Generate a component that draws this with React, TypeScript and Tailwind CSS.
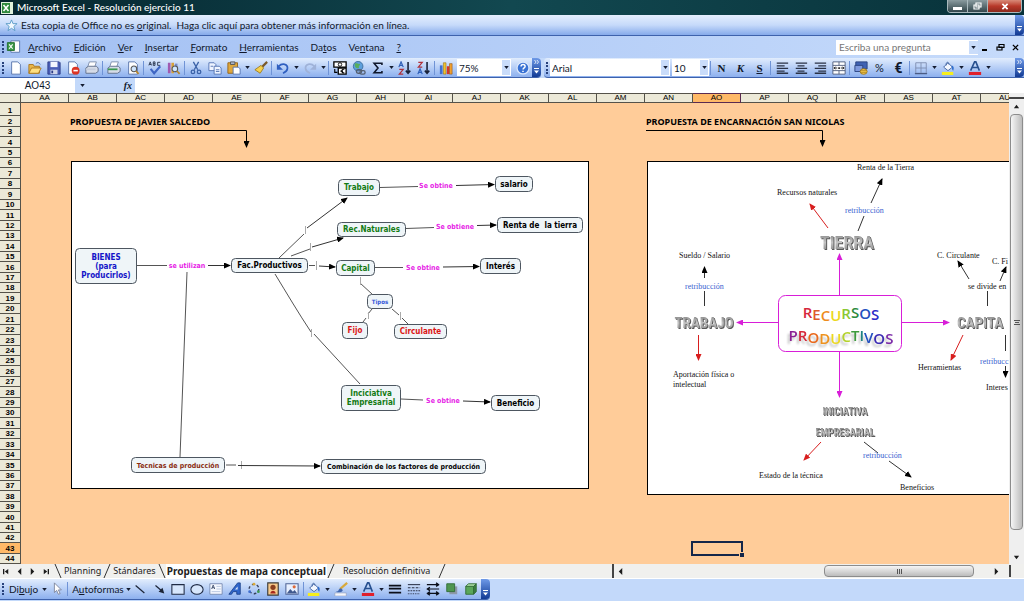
import React from "react";

type Kids = { children?: React.ReactNode };

const Ico = ({ children }: Kids) => (
  <svg viewBox="0 0 16 16" className="h-[14px] w-[14px]" aria-hidden="true">
    {children}
  </svg>
);

const page = <path d="M3 1h7l3 3v11H3z" fill="#fff" stroke="#5470a8" />;
const lens = (
  <g>
    <circle cx="9" cy="9" r="3.2" fill="#cfe6ff" stroke="#555" strokeWidth="1.2" />
    <path d="M11.4 11.4l3 3.4" stroke="#b8862c" strokeWidth="2" />
  </g>
);
const printer = (tone: string) => (
  <g>
    <path d="M5 1h8l-2 6H3z" fill="#fff" stroke="#7a8aa8" />
    <path d="M1 8l3-2h9l2 2v4l-3 2H1z" fill="#d6dce8" stroke="#5c6a86" />
    <path d="M1 9.5h11" stroke={tone} strokeWidth="2" />
  </g>
);
const bucket = (
  <g>
    <path d="M3 7l5-5 5 5-5 4z" fill="#f3f7ff" stroke="#3c5f9e" />
    <path d="M6 5c-1-4 3-5 3-1" fill="none" stroke="#3c5f9e" />
    <path d="M12 5c3 1 3 3 2 6-2-1-1-3-2-6z" fill="#2f6fd0" />
    <path d="M1 12.500h13v3.500H1z" fill="#f6ee1e" />
  </g>
);
const letterA = (
  <g>
    <path d="M3 11L7.500 1h1.500L13 11M5 7.500h6" fill="none" stroke="#27508f" strokeWidth="1.800" />
    <path d="M1 12.500h14v3.500H1z" fill="#e0202c" />
  </g>
);

const icons: Record<string, React.ReactNode> = {
  Nuevo: page,
  Abrir: (
    <g>
      <path d="M1 4h5l1 2h6v8H1z" fill="#e9b64a" stroke="#a8741a" />
      <path d="M1 14l3-6h11l-3 6z" fill="#ffdf80" stroke="#a8741a" />
      <path d="M9 3c2-2 4-1 5 1" fill="none" stroke="#3b66b0" />
    </g>
  ),
  Guardar: (
    <g>
      <path d="M1 1h13l1 1v13H1z" fill="#4a5fb8" stroke="#2b3a86" />
      <path d="M4 1h8v6H4z" fill="#f3f6ff" />
      <path d="M4 10h8v5H4z" fill="#cdd4ea" />
      <path d="M5 11h2v3H5z" fill="#2b3a86" />
    </g>
  ),
  Permiso: (
    <g>
      {page}
      <circle cx="11" cy="11" r="4.500" fill="#dc3424" />
      <path d="M8.500 11h5" stroke="#fff" strokeWidth="1.800" />
    </g>
  ),
  Correo: printer("#c3cbdc"),
  Imprimir: printer("#3a9a4e"),
  "Vista preliminar": (
    <g>
      {page}
      {lens}
    </g>
  ),
  Ortografía: (
    <g>
      <path d="M1 5l1.500-4L4 5M1.500 4h2M6 1v4h2V1H6m0 2h2M14 1.500h-3V5h3" fill="none" stroke="#26324c" />
      <path d="M3 9l4 5 7-8" fill="none" stroke="#3f66c4" strokeWidth="2.400" />
    </g>
  ),
  Referencia: (
    <g>
      <path d="M1 2h3v12H1z" fill="#a05ab0" />
      <path d="M5 2h3v12H5z" fill="#d8a03a" />
      <path d="M9 3h3v10H9z" fill="#7a8cc8" />
      {lens}
    </g>
  ),
  Cortar: (
    <g fill="none" stroke="#3b62a8" strokeWidth="1.500">
      <path d="M5 1l5 9M11 1L6 10" />
      <circle cx="4.500" cy="12.500" r="2" />
      <circle cx="11.500" cy="12.500" r="2" />
    </g>
  ),
  Copiar: (
    <g fill="#eef4ff" stroke="#4f6fb0">
      <path d="M1 2h6l2 2v7H1z" />
      <path d="M7 6h6l2 2v7H7z" />
      <path d="M9 10h4M9 12h4M3 6h3" />
    </g>
  ),
  Pegar: (
    <g>
      <path d="M1 2h11v12H1z" fill="#e0a83c" stroke="#936012" />
      <path d="M4 1h5v3H4z" fill="#a9b3c6" stroke="#555" />
      <path d="M7 7h6l2 2v6H7z" fill="#fff" stroke="#4f6fb0" />
    </g>
  ),
  "Copiar formato": (
    <g>
      <path d="M15 1l-6 6" stroke="#7a5a2a" strokeWidth="2.500" />
      <path d="M8 5l3 3-4 6-6-4z" fill="#f5d04e" stroke="#9b7a1e" />
    </g>
  ),
  Deshacer: (
    <g>
      <path d="M3 6c4-4 11-3 10 3-.5 3-3 4-5 5" fill="none" stroke="#2f5fc0" strokeWidth="2" />
      <path d="M1 3v7h7z" fill="#2f5fc0" />
    </g>
  ),
  Rehacer: (
    <g>
      <path d="M13 6C9 2 2 3 3 9c.5 3 3 4 5 5" fill="none" stroke="#9fb2d8" strokeWidth="2" />
      <path d="M15 3v7H8z" fill="#9fb2d8" />
    </g>
  ),
  Euroconversión: (
    <g>
      <path d="M1 1h14v6H1z" fill="#fff" stroke="#000" strokeWidth="1.500" />
      <circle cx="8" cy="4" r="2" fill="none" stroke="#000" />
      <path d="M6 8h9v7H6z" fill="#fff" stroke="#000" strokeWidth="1.500" />
      <path d="M13 9.500c-4-1-4 5 0 4M8.500 11.500h3M2 9v4h3" fill="none" stroke="#000" strokeWidth="1.300" />
    </g>
  ),
  Hipervínculo: (
    <g>
      <circle cx="7" cy="6" r="5.500" fill="#5d9fdc" stroke="#3b6d9c" />
      <path d="M3 3c3-1 4 1 6 0 1 2-2 2-1 5-3 1-5-1-5-5z" fill="#58ad5c" />
      <rect x="5" y="10" width="6" height="4" rx="2" fill="none" stroke="#555f70" strokeWidth="1.500" />
      <rect x="9" y="11" width="6" height="4" rx="2" fill="none" stroke="#555f70" strokeWidth="1.500" />
    </g>
  ),
  Autosuma: <path d="M12.500 4.500V2.500h-9L8 8l-4.500 5.500h9v-2" fill="none" stroke="#10182c" strokeWidth="1.800" />,
  "Orden ascendente": (
    <g fill="none" strokeWidth="1.400">
      <path d="M1 7l2.500-6L6 7M2 5h3" stroke="#2f5fb8" />
      <path d="M1.500 9.500h4.500L1.500 15H6" stroke="#b0303a" />
      <path d="M11.500 1v13M9 11l2.500 3L14 11" stroke="#1a2238" strokeWidth="1.800" />
    </g>
  ),
  "Orden descendente": (
    <g fill="none" strokeWidth="1.400">
      <path d="M1.500 1.500h4.500L1.500 7H6" stroke="#b0303a" />
      <path d="M1 15l2.500-6L6 15M2 13h3" stroke="#2f5fb8" />
      <path d="M11.500 1v13M9 11l2.500 3L14 11" stroke="#1a2238" strokeWidth="1.800" />
    </g>
  ),
  "Asistente para gráficos": (
    <g>
      <path d="M1 5h3v10H1z" fill="#3f6fd0" />
      <path d="M5 2h3v13H5z" fill="#f0c22e" stroke="#8a6a10" strokeWidth=".6" />
      <path d="M9 6h3v9H9z" fill="#d2352c" />
      <path d="M12 3h3v12h-3z" fill="#f0a02e" stroke="#8a4a10" strokeWidth=".6" />
    </g>
  ),
  Ayuda: (
    <g>
      <circle cx="8" cy="8" r="6.800" fill="#3a72d4" stroke="#dbe7fb" strokeWidth="1.400" />
      <path d="M5.800 6.200c0-3 4.600-3 4.600 0 0 1.800-2.300 1.600-2.300 3.400M8 11v1.600" fill="none" stroke="#fff" strokeWidth="1.700" />
    </g>
  ),
  Izquierda: <path d="M2 2.500h13M2 5.500h9M2 8.500h13M2 11.500h9M2 14h13" stroke="#2a3246" strokeWidth="1.500" />,
  Centrar: <path d="M2 2.500h13M4 5.500h8M2 8.500h13M4 11.500h8M2 14h13" stroke="#2a3246" strokeWidth="1.500" />,
  Derecha: <path d="M2 2.500h13M6 5.500h9M2 8.500h13M6 11.500h9M2 14h13" stroke="#2a3246" strokeWidth="1.500" />,
  Combinar: (
    <g>
      <path d="M1 1h14v14H1zM1 5h14M1 11h14M8 1v4M8 11v4" fill="#fff" stroke="#4a5878" />
      <path d="M2 8h4M10 8h4M4 6.500L2.500 8 4 9.500M12 6.500L13.500 8 12 9.500" fill="none" stroke="#111" />
      <path d="M7.200 7h1.800v2.200H7.200z" fill="#111" />
    </g>
  ),
  Moneda: (
    <g>
      <path d="M2 1h13v8H2z" fill="#3f62b4" stroke="#27407e" />
      <path d="M1 5h9v7H1z" fill="#7f9ade" stroke="#27407e" />
      <ellipse cx="11" cy="12" rx="4" ry="3.200" fill="#f2c74e" stroke="#9a7316" />
      <path d="M7.500 11h7M8 13h6" stroke="#9a7316" strokeWidth=".7" />
    </g>
  ),
  Bordes: (
    <g>
      <path d="M2 2h12v12H2zM8 2v12M2 8h12" fill="none" stroke="#7b8cae" strokeWidth="1" />
      <path d="M1 14.500h14" stroke="#3f4f78" strokeWidth="1.200" />
    </g>
  ),
  "Color de relleno": bucket,
  "Color de fuente": letterA,
  Seleccionar: <path d="M5 1v11l2.600-2.400L9.600 14l2-.8-2-4.200H13z" fill="#fff" stroke="#7b8298" />,
  Línea: <path d="M3 4l10 8.500" stroke="#1c2436" strokeWidth="1.400" />,
  Flecha: (
    <g>
      <path d="M4 4l7 6" stroke="#1c2436" strokeWidth="1.400" />
      <path d="M14 13L7.500 11 12 6.500z" fill="#1c2436" />
    </g>
  ),
  Rectángulo: <path d="M1 3h14v11H1z" fill="#d7e6fc" stroke="#1f2a44" strokeWidth="1.200" />,
  Elipse: <ellipse cx="8" cy="8.500" rx="7" ry="5.500" fill="#d7e6fc" stroke="#1f2a44" strokeWidth="1.200" />,
  "Cuadro de texto": (
    <g>
      <path d="M1 2h14v12H1z" fill="#f6f9ff" stroke="#7286ae" />
      <path d="M3 8l1.800-4.500L6.500 8M3.500 6.500h2.500" fill="none" stroke="#3d4b6c" />
      <path d="M8.500 5h5M8.500 8h5M3 11h10" fill="none" stroke="#b4c2de" />
    </g>
  ),
  WordArt: (
    <g>
      <path d="M1 14L11 1h3v13h-4v-3H6l-2 3z" fill="#2f66cc" stroke="#1e438c" />
      <path d="M8 8.500l3-3.500v3.500z" fill="#dfeafc" />
    </g>
  ),
  Diagrama: (
    <g>
      <circle cx="8" cy="8" r="5.500" fill="none" stroke="#35405c" strokeWidth="1.600" strokeDasharray="3 2.700" />
      <circle cx="8" cy="2.500" r="1.600" fill="#d8a83a" />
      <circle cx="13" cy="11" r="1.600" fill="#3f9a52" />
      <circle cx="3" cy="11" r="1.600" fill="#3f6fd0" />
    </g>
  ),
  "Imagen prediseñada": (
    <g>
      <path d="M2 1h12v14H2z" fill="#f7c98a" stroke="#3b3b3b" strokeWidth="1.300" />
      <circle cx="8" cy="6" r="3" fill="#8a3f20" />
      <path d="M5 13c0-4 6-4 6 0z" fill="#a8281c" />
    </g>
  ),
  Imagen: (
    <g>
      <path d="M1 2h14v12H1z" fill="#e8f0ff" stroke="#4f6496" strokeWidth="1.200" />
      <path d="M2 13l4-5 3 3 2-2 3 4z" fill="#40598e" />
      <circle cx="10.500" cy="5.500" r="1.800" fill="#dd6a3a" />
    </g>
  ),
  "Color de línea": (
    <g>
      <path d="M15 1L7 8" stroke="#d8a93a" strokeWidth="2.600" />
      <path d="M8 7c-3 0-2 4-6 4 4 2 8 0 8-2z" fill="#4168b0" />
      <path d="M1 12.500h13v3.500H1z" fill="#f4f6fb" stroke="#8a94ac" strokeWidth=".6" />
    </g>
  ),
  "Estilo de línea": <path d="M1 4h14M1 7.500h14M1 12h14" stroke="#0b0f1a" strokeWidth="2" />,
  "Estilo de guión": (
    <g stroke="#2b3348" strokeWidth="1.200">
      <path d="M1 3h14" />
      <path d="M1 6.500h14" strokeDasharray="3 1.500" />
      <path d="M1 10h14" strokeDasharray="2 1" />
      <path d="M1 13.500h14" strokeDasharray="1 1" />
    </g>
  ),
  "Estilo de flecha": (
    <g fill="none" stroke="#0b0f1a" strokeWidth="1.400">
      <path d="M1 3h14M1 8h14M1 13h14M11.500 1L14.500 3l-3 2M4.500 6L1.500 8l3 2M11.500 11l3 2-3 2M4.500 11l-3 2 3 2" />
    </g>
  ),
  Sombra: (
    <g>
      <path d="M5 5h9v9H5z" fill="#8d98a8" />
      <path d="M2 2h9v9H2z" fill="#4f9650" stroke="#2f6a34" />
    </g>
  ),
  "Estilo 3D": (
    <g stroke="#2f6a34">
      <path d="M2 5h9v9H2z" fill="#5aa65a" />
      <path d="M2 5l3-3h9l-3 3z" fill="#a6d8a0" />
      <path d="M11 5l3-3v9l-3 3z" fill="#3b7d40" />
    </g>
  ),
};

const Down = () => (
  <svg viewBox="0 0 6 4" className="h-[3px] w-[5px]" aria-hidden="true">
    <path d="M0 0h6L3 4z" fill="#141c30" />
  </svg>
);

const IconButton = ({ name }: { name: string }) => (
  <button type="button" aria-label={name} className="flex h-[18px] w-[19px] shrink-0 items-center justify-center">
    <Ico>{icons[name]}</Ico>
  </button>
);
const More = ({ of }: { of: string }) => (
  <button type="button" aria-label={"Opciones de " + of} className="flex h-[18px] w-2 shrink-0 items-center justify-center">
    <Down />
  </button>
);
const Sep = () => <span className="mx-px h-[14px] w-px shrink-0 bg-[#6f93d6]" />;
const Grip = () => <span className="mx-[2px] h-3 w-[2px] shrink-0 border-l-2 border-dotted border-[#27417c]" />;

/* "|" is a separator, a trailing "+" adds a drop-down arrow */
const Tools = ({ list }: { list: string[] }) => (
  <>
    {list.map((t, i) => {
      if (t === "|") return <Sep key={i} />;
      const name = t.replace("+", "");
      return (
        <React.Fragment key={i}>
          <IconButton name={name} />
          {t.endsWith("+") && <More of={name} />}
        </React.Fragment>
      );
    })}
  </>
);

const BarEnd = ({ chevrons = false }: { chevrons?: boolean }) => (
  <button
    type="button"
    aria-label="Opciones de barra"
    className="flex w-[9px] shrink-0 flex-col items-center justify-end gap-1 self-stretch rounded-r-sm bg-linear-to-b from-[#6f9ae8] to-[#123a94] pb-[3px]"
  >
    {chevrons && (
      <svg viewBox="0 0 7 5" className="h-[4px] w-[7px]" aria-hidden="true">
        <path d="M1 0l2 2.500L1 5M4 0l2 2.500L4 5" fill="none" stroke="#fff" />
      </svg>
    )}
    <svg viewBox="0 0 7 6" className="h-[6px] w-[7px]" aria-hidden="true">
      <path d="M1 .5h5" stroke="#fff" />
      <path d="M1 2.500h5L3.500 5.500z" fill="#fff" />
    </svg>
  </button>
);

const Combo = ({ label, value, width }: { label: string; value: string; width: string }) => (
  <div className={"relative h-[17px] shrink-0 bg-white " + width}>
    <select aria-label={label} className="h-full w-full appearance-none bg-transparent pr-3 pl-[2px] text-[10px] leading-4 text-[#10182c] outline-none">
      <option>{value}</option>
    </select>
    <span className="pointer-events-none absolute inset-y-px right-px flex w-2 items-center justify-center bg-[#c9dcfa]">
      <Down />
    </span>
  </div>
);

const Menu = ({ pre, k, post }: { pre: string; k: string; post: string }) => (
  <button type="button" className="px-1.5 whitespace-pre">
    {pre}
    <u>{k}</u>
    {post}
  </button>
);

const columns = "AA AB AC AD AE AF AG AH AI AJ AK AL AM AN AO AP AQ AR AS AT AU".split(" ");
const rows = Array.from({ length: 44 }, (_, i) => i + 1);
const rowHeight = (n: number) => (n === 1 ? "h-[13px]" : [2, 4, 7, 9, 11].includes(n % 12) ? "h-[11px]" : "h-[10px]");

const Sheet = () => (
  <table className="w-[1029px] table-fixed border-separate border-spacing-0 font-['Liberation_Sans',Arial,sans-serif] text-black">
    <thead>
      <tr className="h-[10px]">
        <th aria-label="Seleccionar todo" className="w-[21px] border-y border-r border-[#55524a] bg-[#ece9d8] p-0" />
        {columns.map((c) => (
          <th
            key={c}
            scope="col"
            className={
              "border-y border-r p-0 text-[8px] leading-[8px] font-normal " +
              (c === "AO" ? "border-[#5a2b50] bg-[#ffb967]" : "border-[#55524a] bg-[#ece9d8]")
            }
          >
            {c}
          </th>
        ))}
      </tr>
    </thead>
    <tbody>
      {rows.map((n) => (
        <tr key={n} className={rowHeight(n)}>
          <th
            scope="row"
            className={
              "border-r border-b border-[#55524a] p-0 align-bottom text-[8px] leading-[9px] font-bold " +
              (n === 43 ? "bg-[#ffb967]" : "bg-[#ece9d8]")
            }
          >
            {n}
          </th>
          {columns.map((c) => {
            const title =
              n === 2 && c === "AB" ? "PROPUESTA DE JAVIER SALCEDO" : n === 2 && c === "AN" ? "PROPUESTA DE ENCARNACIÓN SAN NICOLAS" : "";
            if (n === 43 && c === "AO")
              return (
                <td key={c} aria-selected="true" className="relative p-0 outline-2 outline-[#14264a]">
                  <span className="absolute -right-[3px] -bottom-[3px] h-1 w-1 bg-[#14264a] ring-1 ring-[#ffcc99]" />
                </td>
              );
            return (
              <td key={c} className="p-0 pl-px text-left align-middle font-['Noto_Sans',sans-serif] text-[9px] leading-[10px] font-bold whitespace-nowrap">
                {title}
              </td>
            );
          })}
        </tr>
      ))}
    </tbody>
  </table>
);

const Heads = () => (
  <defs>
    {[
      ["k", "#000"],
      ["r", "#d81e1e"],
      ["m", "#d81ed8"],
    ].map(([id, c]) => (
      <marker key={id} id={"head-" + id} viewBox="0 0 7 6" refX="6" refY="3" markerWidth="7" markerHeight="6" orient="auto" markerUnits="userSpaceOnUse">
        <path d="M0 0l7 3-7 3z" fill={c} />
      </marker>
    ))}
  </defs>
);

/* x, y, width, height, fill, font size, lines */
type Node = [number, number, number, number, string, number, string[]];
const nodes: Node[] = [
  [75, 248, 62, 36, "#1414c8", 8, ["BIENES", "(para", "Producirlos)"]],
  [231, 258, 77, 15, "#000", 8, ["Fac.Productivos"]],
  [338, 179, 42, 17, "#127a12", 8, ["Trabajo"]],
  [337, 222, 69, 15, "#127a12", 8, ["Rec.Naturales"]],
  [336, 260, 39, 16, "#127a12", 8, ["Capital"]],
  [495, 176, 38, 16, "#000", 8, ["salario"]],
  [497, 217, 86, 16, "#000", 8, ["Renta de  la tierra"]],
  [480, 258, 41, 16, "#000", 8, ["Interés"]],
  [367, 294, 26, 15, "#3457d8", 6, ["Tipos"]],
  [342, 322, 26, 17, "#dc1414", 8, ["Fijo"]],
  [394, 324, 53, 15, "#dc1414", 8, ["Circulante"]],
  [341, 385, 60, 26, "#127a12", 8, ["Inciciativa", "Empresarial"]],
  [491, 395, 49, 16, "#000", 8, ["Beneficio"]],
  [131, 457, 94, 16, "#8a2c10", 7, ["Tecnicas de producción"]],
  [321, 459, 165, 15, "#000", 7, ["Combinación de los factores de producción"]],
];
const links: [string, number, number][] = [
  ["se utilizan", 187, 268],
  ["Se obtine", 436, 188],
  ["Se obtiene", 455, 229],
  ["Se obtine", 423, 270],
  ["Se obtine", 443, 403],
];

const JavierMap = () => (
  <svg viewBox="70 128 520 362" width="520" height="362" className="absolute top-[35px] left-[70px]" role="img" aria-label="Mapa conceptual de Javier Salcedo">
    <Heads />
    <path d="M70 130.500h176.500V147" fill="none" stroke="#000" markerEnd="url(#head-k)" />
    <rect x="71.500" y="161.500" width="517" height="327" fill="#fff" stroke="#000" />
    <g stroke="#555" fill="none">
      <path d="M137 265.500h30M187 272l-7 185M279 258l25-24M291 256l19-7M309 265.500h6" />
      <path d="M380 187.500l38-1M406 228.500l28-1M375 267.500h28M401 399l22 1M226 465h10" />
      <path d="M275 274c11 18 24 40 36 58M314 334l46 50M360 283l12 11M372 309l-4 5M366 318l-3 4M392 309l7 6M402 318l6 6" />
      <path d="M305.500 226v8M310.500 243v8M316.500 261v9M311.500 329v8M368.500 312v7M400.500 312v8M241.500 461v8M360.500 277v8" stroke="#aaa" />
    </g>
    <g stroke="#333" fill="none">
      <path d="M208 265.500h22" markerEnd="url(#head-k)" />
      <path d="M307 228l40-30" markerEnd="url(#head-k)" />
      <path d="M312 247l31-9" markerEnd="url(#head-k)" />
      <path d="M319 266l16 1" markerEnd="url(#head-k)" />
      <path d="M456 185.500l38-1" markerEnd="url(#head-k)" />
      <path d="M477 225.500l19-.5" markerEnd="url(#head-k)" />
      <path d="M443 267l36-.5" markerEnd="url(#head-k)" />
      <path d="M463 401l27 1" markerEnd="url(#head-k)" />
      <path d="M238 465.500l82 .5" markerEnd="url(#head-k)" />
    </g>
    <g fontFamily="'DejaVu Sans Condensed', 'DejaVu Sans', Verdana, sans-serif" fontWeight="bold" textAnchor="middle">
      {nodes.map(([x, y, w, h, fill, size, lines]) => (
        <g key={lines[0]}>
          <rect x={x + 0.5} y={y + 0.5} width={w - 1} height={h - 1} rx="4" fill="#eff5f8" stroke="#4d5660" />
          {lines.map((l, i) => (
            <text
              key={l}
              x={x + w / 2}
              y={Math.round(y + h / 2 + size * 0.37 + (i - (lines.length - 1) / 2) * 9)}
              fill={fill}
              fontSize={size}
              xmlSpace="preserve"
            >
              {l}
            </text>
          ))}
        </g>
      ))}
      {links.map(([t, x, y]) => (
        <text key={t + y} x={x} y={y} fill="#e61ee6" fontSize="7">
          {t}
        </text>
      ))}
    </g>
  </svg>
);

const labels: [string, number, number, string][] = [
  ["Renta de la Tierra", 857, 170, "#111"],
  ["Recursos naturales", 777, 195, "#111"],
  ["retribucción", 845, 213, "#3a62d0"],
  ["Sueldo / Salario", 679, 258, "#111"],
  ["retribucción", 685, 289, "#3a62d0"],
  ["C. Circulante", 937, 258, "#111"],
  ["C. Fi", 992, 264, "#111"],
  ["se divide en", 968, 289, "#111"],
  ["Aportación física o", 673, 377, "#111"],
  ["intelectual", 673, 387, "#111"],
  ["Herramientas", 918, 370, "#111"],
  ["retribucc", 980, 364, "#3a62d0"],
  ["Interes", 986, 390, "#111"],
  ["Estado de la técnica", 759, 478, "#111"],
  ["retribucción", 863, 458, "#3a62d0"],
  ["Beneficios", 900, 490, "#111"],
];
const wave1: [string, string, number][] = [
  ["R", "#d6283c", 0],
  ["E", "#de5a2c", 2],
  ["C", "#ee8c1e", 1],
  ["U", "#ecd81e", 0],
  ["R", "#8cc832", -2],
  ["S", "#2c8a3c", -1],
  ["O", "#2450c0", 1],
  ["S", "#2a2ac8", 1],
];
const wave2: [string, string, number][] = [
  ["P", "#8a2094", 0],
  ["R", "#d6283c", 0],
  ["O", "#ea6a1e", 2],
  ["D", "#ee921e", 1],
  ["U", "#ecd81e", 0],
  ["C", "#b4d22c", -2],
  ["T", "#3c9a3c", -1],
  ["I", "#1e8282", 0],
  ["V", "#2450c0", 2],
  ["O", "#3c2cb4", 1],
  ["S", "#7a28a8", 0],
];

const EncarnacionMap = () => (
  <svg viewBox="646 128 400 368" width="400" height="368" className="absolute top-[35px] left-[646px]" role="img" aria-label="Mapa conceptual de Encarnación San Nicolas">
    <defs>
      <linearGradient id="steel" x1="0" y1="0" x2="0" y2="1">
        <stop offset="0" stopColor="#7c7c7c" />
        <stop offset=".5" stopColor="#c4c4c4" />
        <stop offset="1" stopColor="#7c7c7c" />
      </linearGradient>
    </defs>
    <path d="M646 130.500h176.500V146" fill="none" stroke="#000" markerEnd="url(#head-k)" />
    <rect x="647.500" y="161.500" width="420" height="333" fill="#fff" stroke="#000" />
    <g stroke="#333" fill="none">
      <path d="M858 231l6-15M704.500 291v15M987.500 291v15M1005.500 335v16M864 442l14 11" />
      <path d="M871 203l11-24" markerEnd="url(#head-k)" />
      <path d="M704.500 278v-11" markerEnd="url(#head-k)" />
      <path d="M969 279l-11-18" markerEnd="url(#head-k)" />
      <path d="M1000 281l6-14" markerEnd="url(#head-k)" />
      <path d="M1005.500 366v11" markerEnd="url(#head-k)" />
      <path d="M889 461l22 16" markerEnd="url(#head-k)" />
    </g>
    <g stroke="#d81e1e" fill="none">
      <path d="M828 228l-18-24" markerEnd="url(#head-r)" />
      <path d="M698.500 335v25" markerEnd="url(#head-r)" />
      <path d="M963 335l-12 25" markerEnd="url(#head-r)" />
      <path d="M821 442l-17 18" markerEnd="url(#head-r)" />
    </g>
    <g stroke="#d81ed8" fill="none">
      <rect x="778.500" y="295.500" width="123" height="56" rx="7" fill="#fff" />
      <path d="M839.500 295v-41" markerEnd="url(#head-m)" />
      <path d="M839.500 352v45" markerEnd="url(#head-m)" />
      <path d="M778 322.500h-41" markerEnd="url(#head-m)" />
      <path d="M902 322.500h47" markerEnd="url(#head-m)" />
    </g>
    <g fontFamily="'Liberation Serif', 'Times New Roman', serif" fontSize="8">
      {labels.map(([t, x, y, fill]) => (
        <text key={t + y} x={x} y={y} fill={fill}>
          {t}
        </text>
      ))}
    </g>
    <g
      fontFamily="'Roboto Condensed', Roboto, 'Liberation Sans', sans-serif"
      fontWeight="bold"
      fill="url(#steel)"
      textAnchor="middle"
      className="[filter:drop-shadow(1px_1px_0_#5a5a5a)]"
    >
      <text x="847" y="249" fontSize="18">TIERRA</text>
      <text x="704" y="328" fontSize="15">TRABAJO</text>
      <text x="957" y="328" fontSize="15" textAnchor="start">CAPITA</text>
      <text x="845" y="415" fontSize="10">INICIATIVA</text>
      <text x="845" y="436" fontSize="10">EMPRESARIAL</text>
    </g>
    <g fontFamily="'Open Sans', 'Noto Sans', sans-serif" fontWeight="600" fontSize="15" textAnchor="middle">
      <text x="841" y="318">
        {wave1.map(([c, fill, dy], i) => (
          <tspan key={i} fill={fill} dy={dy}>
            {c}
          </tspan>
        ))}
      </text>
      <text x="841" y="341" className="[filter:drop-shadow(-2px_3px_1px_#c4c4c4)]">
        {wave2.map(([c, fill, dy], i) => (
          <tspan key={i} fill={fill} dy={dy}>
            {c}
          </tspan>
        ))}
      </text>
    </g>
  </svg>
);

const Arrow = ({ d, label }: { d: string; label: string }) => (
  <button type="button" aria-label={label} className="flex h-[14px] w-[13px] shrink-0 items-center justify-center">
    <svg viewBox="0 0 8 8" className="h-[7px] w-[7px]" aria-hidden="true">
      <path d={d} fill="#1c1c1c" />
    </svg>
  </button>
);

const Slash = ({ d }: { d: string }) => (
  <svg viewBox="0 0 8 14" className="h-[14px] w-2 shrink-0" aria-hidden="true">
    <path d={d} fill="none" stroke="#333" />
  </svg>
);

export default function App() {
  return (
    <div className="flex min-h-screen flex-col overflow-hidden bg-[#c3d9fa] font-['Lato','Noto_Sans',sans-serif] text-[10px] leading-[14px] text-[#10182c]">
      <header className="flex h-[15px] items-start bg-linear-to-r from-[#06262f] via-[#124850] to-[#08323a]">
        <svg viewBox="0 0 12 12" className="mx-[1px] mt-[2px] h-3 w-3" aria-hidden="true">
          <path d="M0 0h12v12H0z" fill="#dff0dc" />
          <path d="M1 1h8v10H1z" fill="#2f8a3c" />
          <path d="M2.500 3l5 6M7.500 3l-5 6" stroke="#fff" strokeWidth="1.600" />
        </svg>
        <h1 className="ml-[3px] text-[10px] leading-[15px] font-medium whitespace-nowrap text-white">Microsoft Excel - Resolución ejercicio 11</h1>
        <div className="mr-[2px] ml-auto flex h-[13px] overflow-hidden rounded-b border border-t-0 border-[#a9b9bd]">
          <button type="button" aria-label="Minimizar" className="flex w-5 items-center justify-center border-r border-[#a9b9bd] bg-linear-to-b from-[#8a9b9f] to-[#33474c]">
            <span className="mt-1 h-[3px] w-[9px] bg-white" />
          </button>
          <button type="button" aria-label="Restaurar" className="flex w-5 items-center justify-center border-r border-[#a9b9bd] bg-linear-to-b from-[#8a9b9f] to-[#33474c]">
            <svg viewBox="0 0 9 8" className="h-2 w-[9px]" aria-hidden="true">
              <path d="M3 1h5v4H3zM1 3h5v4H1z" fill="none" stroke="#fff" strokeWidth="1.200" />
            </svg>
          </button>
          <button type="button" aria-label="Cerrar" className="flex w-[33px] items-center justify-center bg-linear-to-b from-[#d88a78] via-[#b8392a] to-[#8c2a1c]">
            <svg viewBox="0 0 8 8" className="h-[7px] w-2" aria-hidden="true">
              <path d="M1 1l6 6M7 1L1 7" stroke="#fff" strokeWidth="2" />
            </svg>
          </button>
        </div>
      </header>

      <div className="flex h-[21px] items-center border-b border-[#3e62ac] bg-linear-to-b from-[#e4eefd] via-[#c6dafa] to-[#86aaea]">
        <svg viewBox="0 0 14 14" className="ml-[5px] h-[13px] w-[13px]" aria-hidden="true">
          <path d="M7 1l1.600 4H13L9.500 8l1.300 4.600L7 10l-3.800 2.600L4.500 8 1 5h4.400z" fill="#f3faff" stroke="#5c9cc8" />
        </svg>
        <a href="#original" className="ml-[3px] whitespace-pre">
          Esta copia de Office no es <u>o</u>riginal.  Haga clic aquí para obtener más información en línea.
        </a>
        <span className="ml-auto flex self-stretch">
          <BarEnd />
        </span>
      </div>

      <nav className="flex h-[22px] items-center bg-linear-to-r from-[#a3c0f3] to-[#c6dbfb]">
        <Grip />
        <svg viewBox="0 0 16 16" className="mr-px h-[14px] w-[15px]" aria-hidden="true">
          <path d="M5 1h10v13H5z" fill="#fff" stroke="#5470a8" />
          <path d="M1 3h8v9H1z" fill="#3d9a48" stroke="#1e6a2a" />
          <path d="M3 5l4 5M7 5l-4 5" stroke="#fff" strokeWidth="1.300" />
        </svg>
        <Menu pre="" k="A" post="rchivo" />
        <Menu pre="" k="E" post="dición" />
        <Menu pre="" k="V" post="er" />
        <Menu pre="" k="I" post="nsertar" />
        <Menu pre="" k="F" post="ormato" />
        <Menu pre="" k="H" post="erramientas" />
        <Menu pre="Da" k="t" post="os" />
        <Menu pre="Ve" k="n" post="tana" />
        <Menu pre="" k="?" post="" />
        <div className="ml-auto flex h-[15px] w-[142px] items-center bg-white">
          <input aria-label="Escriba una pregunta" placeholder="Escriba una pregunta" className="h-full min-w-0 flex-1 bg-transparent pl-[3px] text-[10px] outline-none placeholder:text-[#777]" />
          <button type="button" aria-label="Preguntas" className="flex h-[13px] w-[9px] items-center justify-center bg-[#c9dcfa]">
            <Down />
          </button>
        </div>
        <div className="mr-[5px] ml-1 flex items-center gap-[7px]">
          <button type="button" aria-label="Minimizar libro" className="flex h-2 w-[7px] items-end">
            <span className="h-[2px] w-[5px] bg-black" />
          </button>
          <button type="button" aria-label="Restaurar libro">
            <svg viewBox="0 0 9 8" className="h-2 w-[9px]">
              <path d="M3 1.500h5v3H3zM1 4h5v3H1z" fill="#c6dbfb" stroke="#000" strokeWidth="1.200" />
            </svg>
          </button>
          <button type="button" aria-label="Cerrar libro">
            <svg viewBox="0 0 8 8" className="h-[7px] w-[7px]">
              <path d="M1 1l6 6M7 1L1 7" stroke="#000" strokeWidth="1.500" />
            </svg>
          </button>
        </div>
      </nav>

      <div className="flex h-5 items-stretch gap-[3px] bg-[#c3d9fa]">
        <div role="toolbar" aria-label="Estándar" className="flex items-center rounded-r-sm border-b border-[#3e62ac] bg-linear-to-b from-[#e2edfd] to-[#8db0ee]">
          <Grip />
          <Tools
            list={[
              "Nuevo", "Abrir", "Guardar", "Permiso", "Correo", "|", "Imprimir", "Vista preliminar", "|", "Ortografía", "Referencia", "|",
              "Cortar", "Copiar", "Pegar+", "Copiar formato", "|", "Deshacer+", "Rehacer+", "|", "Euroconversión", "Hipervínculo", "Autosuma+",
              "Orden ascendente", "Orden descendente", "|", "Asistente para gráficos",
            ]}
          />
          <Combo label="Zoom" value="75%" width="w-[54px] mx-[2px]" />
          <IconButton name="Ayuda" />
          <BarEnd chevrons />
        </div>
        <div role="toolbar" aria-label="Formato" className="flex flex-1 items-center rounded-l-sm border-b border-[#3e62ac] bg-linear-to-b from-[#e2edfd] to-[#8db0ee]">
          <Grip />
          <Combo label="Fuente" value="Arial" width="w-[120px] mr-[2px]" />
          <Combo label="Tamaño de fuente" value="10" width="w-[37px]" />
          <Sep />
          <div className="flex font-['Liberation_Serif',serif] text-[11px] leading-[18px] font-bold">
            <button type="button" aria-label="Negrita" className="w-[19px]">N</button>
            <button type="button" aria-label="Cursiva" className="w-[19px] italic">K</button>
            <button type="button" aria-label="Subrayado" className="w-[19px] underline">S</button>
          </div>
          <Sep />
          <Tools list={["Izquierda", "Centrar", "Derecha", "Combinar", "|", "Moneda"]} />
          <button type="button" aria-label="Estilo porcentual" className="w-[19px] text-[11px]">%</button>
          <button type="button" aria-label="Euro" className="w-[19px] font-['Roboto',sans-serif] text-[14px] font-bold">€</button>
          <Tools list={["|", "Bordes+", "Color de relleno+", "Color de fuente+"]} />
          <span className="ml-auto flex self-stretch">
            <BarEnd chevrons />
          </span>
        </div>
      </div>

      <div className="flex h-[15px] items-stretch bg-white">
        <input aria-label="Cuadro de nombres" defaultValue="AO43" className="w-[75px] bg-white text-center font-['Liberation_Sans',Arial,sans-serif] text-[10px] outline-none" />
        <div className="flex w-[60px] items-center justify-between bg-[#c3d9fa] pr-[3px] pl-[5px]">
          <button type="button" aria-label="Nombres definidos"><Down /></button>
          <button type="button" aria-label="Insertar función" className="font-['Liberation_Serif',serif] text-[10px] leading-3 font-bold italic">fx</button>
        </div>
        <input aria-label="Barra de fórmulas" className="min-w-0 flex-1 bg-white outline-none" />
      </div>

      <main className="flex flex-1">
        <div className="relative min-w-0 flex-1 overflow-hidden bg-[#ffcc99]">
          <Sheet />
          <JavierMap />
          <EncarnacionMap />
        </div>
        <div className="flex w-[15px] flex-col items-center bg-[#efefef]">
          <span className="h-[6px] w-full border-b-2 border-[#444]" />
          <Arrow label="Subir" d="M4 2l3 4H1z" />
          <div className="mt-px flex min-h-0 w-[13px] flex-1 items-center justify-center rounded-sm border border-[#8c8c8c] bg-linear-to-r from-[#f6f6f6] to-[#bcbcbc]">
            <span className="h-[5px] w-[6px] border-y border-[#555] p-px">
              <span className="block h-px bg-[#555]" />
            </span>
          </div>
          <span className="h-5" />
          <Arrow label="Bajar" d="M4 6L1 2h6z" />
        </div>
      </main>

      <div className="flex h-[15px] items-center border-b border-white bg-[#f0f0ee] font-['Noto_Sans',sans-serif] text-[9px] text-[#222]">
        <div className="flex w-[54px] shrink-0">
          <Arrow label="Primera hoja" d="M0 1h1.500v6H0zM6 1v6L2 4z" />
          <Arrow label="Hoja anterior" d="M6 0v8L2 4z" />
          <Arrow label="Hoja siguiente" d="M2 0v8l4-4z" />
          <Arrow label="Última hoja" d="M6.500 1H8v6H6.500zM2 1v6l4-3z" />
        </div>
        <Slash d="M1 0l6 14" />
        <button type="button" className="px-[2px]">Planning</button>
        <Slash d="M7 0L1 14" />
        <button type="button" className="px-[2px]">Stándares</button>
        <Slash d="M1 0l6 14" />
        <button type="button" aria-current="page" className="bg-white px-px text-[10px] font-bold whitespace-nowrap">Propuestas de mapa conceptual</button>
        <Slash d="M7 0L1 14" />
        <button type="button" className="px-[8px] whitespace-nowrap">Resolución definitiva</button>
        <Slash d="M7 0L1 14" />
        <div className="ml-auto flex h-[14px] w-[412px] shrink-0 items-center border-l-2 border-[#444]">
          <Arrow label="Izquierda" d="M6 0v8L2 4z" />
          <span className="flex-1" />
          <div className="flex h-3 w-[150px] items-center justify-center rounded-sm border border-[#8c8c8c] bg-linear-to-b from-[#f6f6f6] to-[#bcbcbc]">
            <span className="h-[5px] w-[5px] border-x border-[#555] px-px">
              <span className="mx-auto block h-full w-px bg-[#555]" />
            </span>
          </div>
          <span className="w-4" />
          <Arrow label="Derecha" d="M2 0v8l4-4z" />
          <span className="mr-[13px] ml-[6px] h-3 w-[2px] bg-[#444]" />
        </div>
      </div>

      <footer className="flex h-[23px] items-stretch border-b border-white bg-[#c3d9fa] pb-px">
        <div role="toolbar" aria-label="Dibujo" className="flex items-center rounded-r-sm border-b border-[#3e62ac] bg-linear-to-b from-[#e2edfd] to-[#8db0ee]">
          <Grip />
          <button type="button" className="flex items-center gap-1 pl-[3px] whitespace-pre">
            <span>Di<u>b</u>ujo</span>
            <Down />
          </button>
          <IconButton name="Seleccionar" />
          <Sep />
          <button type="button" className="flex items-center gap-[2px] pl-[3px] whitespace-pre">
            <span>A<u>u</u>toformas</span>
            <Down />
          </button>
          <Tools
            list={[
              "Línea", "Flecha", "Rectángulo", "Elipse", "Cuadro de texto", "WordArt", "Diagrama", "Imagen prediseñada", "Imagen", "|",
              "Color de relleno+", "Color de línea+", "Color de fuente+", "Estilo de línea", "Estilo de guión", "Estilo de flecha", "Sombra", "Estilo 3D",
            ]}
          />
          <BarEnd />
        </div>
      </footer>
    </div>
  );
}
